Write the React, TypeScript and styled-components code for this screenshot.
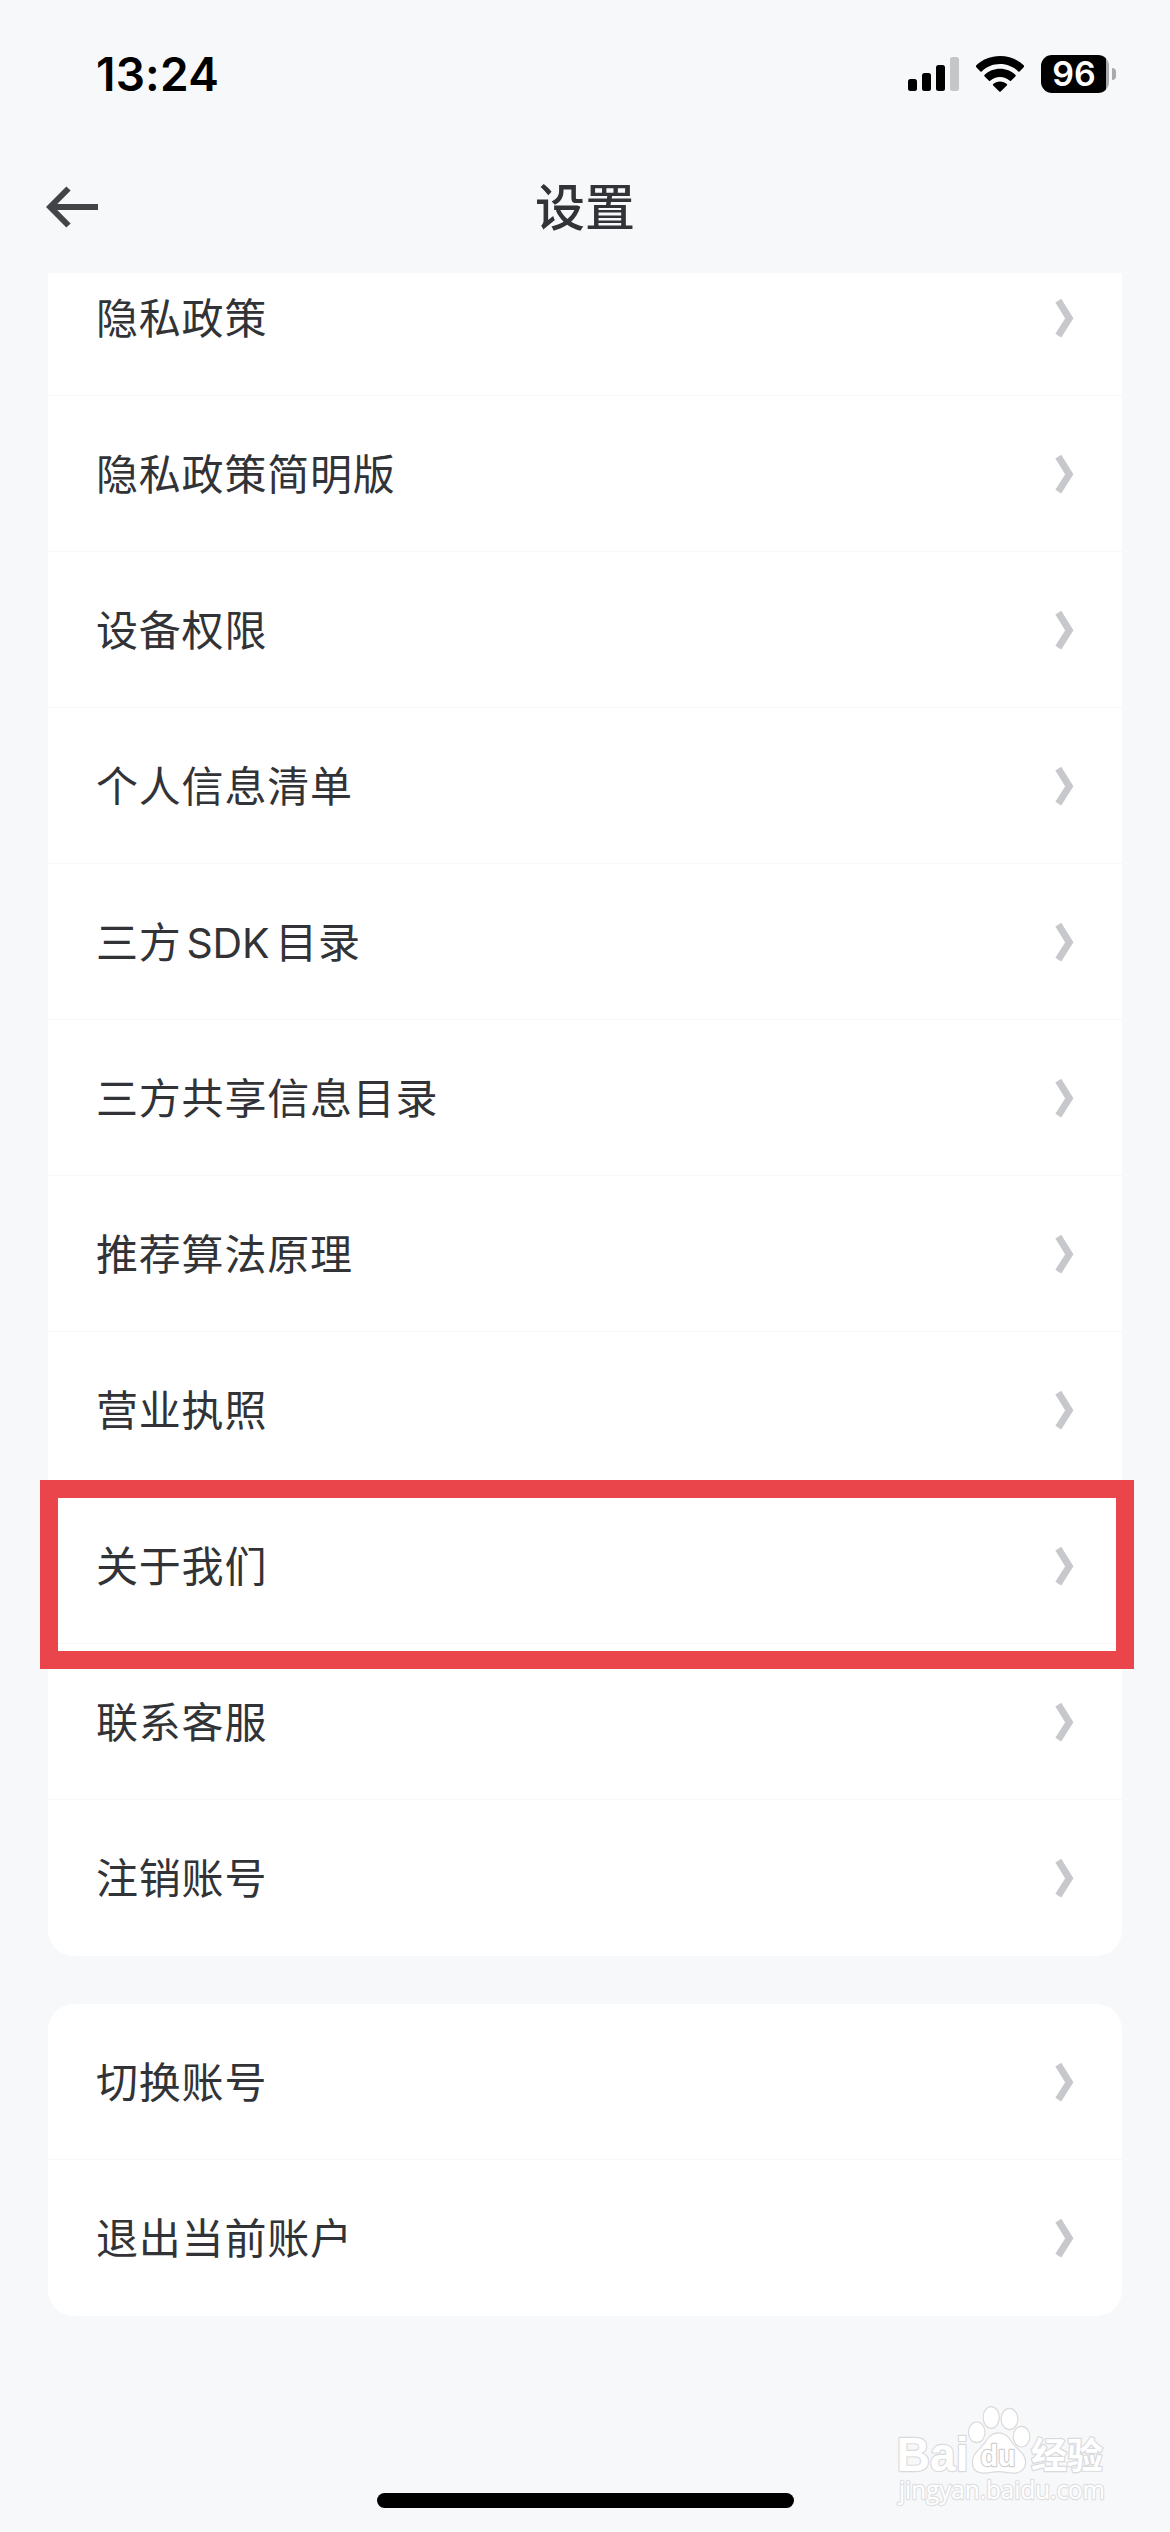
import React from "react";
import styled, { createGlobalStyle } from "styled-components";

const GlobalStyle = createGlobalStyle`
  html, body { margin: 0; padding: 0; background: #f7f8fa; }
  * { box-sizing: border-box; }
`;

const Screen = styled.div`
  position: relative;
  display: flex;
  flex-direction: column;
  width: 1170px;
  height: 2532px;
  overflow: hidden;
  background: #f7f8fa;
  color: #323337;
  font-family: Inter, "Noto Sans CJK SC", sans-serif;
`;

const StatusBar = styled.header`
  display: flex;
  justify-content: space-between;
  align-items: center;
  flex: none;
  height: 148px;
  padding: 0 54px 0 96px;
`;

const Clock = styled.time`
  color: #000;
  font-size: 46px;
  font-weight: 600;
  line-height: 56px;
  letter-spacing: 0.2px;
`;

const StatusIcons = styled.div`
  display: flex;
  align-items: center;
  gap: 17px;
  height: 38px;
`;

const Battery = styled.div`
  display: flex;
  align-items: center;
  gap: 3px;
`;

const BatteryBody = styled.div`
  display: flex;
  align-items: center;
  justify-content: center;
  width: 68px;
  height: 38px;
  padding-right: 2px;
  border-radius: 11px;
  background: linear-gradient(to right, #000 65px, #a9aaac 65px);
  color: #fff;
  font-size: 34px;
  font-weight: 600;
  line-height: 38px;
`;

const BatteryTip = styled.div`
  width: 4px;
  height: 12px;
  border-radius: 0 6px 6px 0;
  background: #a9aaac;
`;

const NavBar = styled.nav`
  display: grid;
  grid-template-columns: 1fr auto 1fr;
  align-items: center;
  flex: none;
  height: 125px;
  padding: 0 46px 7px;
`;

const BackButton = styled.button`
  display: flex;
  justify-self: start;
  padding: 0;
  border: 0;
  background: none;
`;

const Title = styled.h1`
  margin: 2px 0 0;
  font-size: 50px;
  font-weight: 500;
  line-height: 72px;
`;

const ScrollArea = styled.main`
  display: flex;
  flex-direction: column;
  flex: 1;
  gap: 48px;
  min-height: 0;
  padding: 0 48px;
  overflow: hidden;
`;

const Card = styled.section<{ $scrolled?: number }>`
  flex: none;
  margin-top: ${(p) => -(p.$scrolled ?? 0)}px;
  border-radius: 26px;
  background: #fff;
`;

const Row = styled.div`
  position: relative;
  display: flex;
  align-items: center;
  justify-content: space-between;
  height: 156px;
  padding: 0 48px;
  border-bottom: 1px solid #f8f8f9;

  &:last-child {
    border-bottom-color: transparent;
  }
`;

const Label = styled.span`
  margin-top: 2px;
  font-size: 42px;
  letter-spacing: 0.8px;
  line-height: 60px;
`;

const Latin = styled.span`
  margin: 0 6px 0 5px;
  font-size: 41px;
  letter-spacing: -0.3px;
`;

const Highlight = styled.div`
  position: absolute;
  z-index: 1;
  top: -8px;
  right: -12px;
  bottom: -26px;
  left: -8px;
  border: 18px solid #e9454b;
`;

const HomeIndicator = styled.div`
  position: absolute;
  bottom: 24px;
  left: 377px;
  width: 417px;
  height: 15px;
  border-radius: 8px;
  background: #000;
`;

const WatermarkArt = styled.svg`
  position: absolute;
  right: 54px;
  bottom: 20px;
`;

const ChevronIcon = styled.svg`
  flex: none;
  overflow: visible;
`;

const Signal = () => (
  <svg width="51" height="36" viewBox="0 0 51 36">
    <rect x="0" y="23" width="9" height="12" rx="2.5" />
    <rect x="14" y="17" width="9" height="18" rx="2.5" />
    <rect x="28" y="9" width="9" height="26" rx="2.5" />
    <rect x="42" y="1" width="9" height="34" rx="2.5" fill="#c5c6c8" />
  </svg>
);

const Wifi = () => (
  <svg width="48" height="36" viewBox="0 0 48 36">
    <path d="M24 0C33.3 0 41.7 3.6 47.7 9.3Q48.6 10.2 47.7 11.2L43.6 15.4Q43 16 42.3 15.4C37.5 10.9 31 8.1 24 8.1S10.5 10.9 5.7 15.4Q5 16 4.4 15.4L.3 11.2Q-.6 10.2.3 9.3C6.3 3.6 14.7 0 24 0Z" />
    <path d="M24 12.8C30 12.8 35.4 15.1 39.4 18.8Q40.2 19.6 39.4 20.4L35 24.8Q34.4 25.3 33.8 24.8C31.2 22.5 27.8 21 24 21S16.8 22.5 14.2 24.8Q13.6 25.3 13 24.8L8.6 20.4Q7.8 19.6 8.6 18.8C12.6 15.1 18 12.8 24 12.8Z" />
    <path d="M24 25.5C26.6 25.5 29 26.5 30.8 28Q31.5 28.7 30.8 29.4L24.7 35.5Q24 36.2 23.3 35.5L17.2 29.4Q16.5 28.7 17.2 28C19 26.5 21.4 25.5 24 25.5Z" />
  </svg>
);

const BackArrow = () => (
  <svg width="53" height="42" viewBox="0 0 53 42" fill="none" stroke="#424447" strokeWidth="6">
    <path d="M22.5 2.5L4.2 21L22.5 39.5M5 21H52" />
  </svg>
);

const Chevron = () => (
  <ChevronIcon width="20" height="39" viewBox="0 0 20 39" fill="none" stroke="#c7c8cc" strokeWidth="7">
    <path d="M4.3 2.7L15.3 20.3L4.3 37.7" />
  </ChevronIcon>
);

const Watermark = () => (
  <WatermarkArt
    width="220"
    height="112"
    viewBox="896 2400 220 112"
    fill="#fff"
    stroke="#d9dadc"
    strokeWidth="2.4"
    paintOrder="stroke"
    strokeLinejoin="round"
  >
    <text x="896.5" y="2471" textLength="72" lengthAdjust="spacingAndGlyphs" fontFamily="Liberation Sans" fontSize="48" fontWeight="700">Bai</text>
    <ellipse cx="976.7" cy="2432.3" rx="7.7" ry="9.7" />
    <ellipse cx="991.2" cy="2417.5" rx="7.5" ry="10.3" />
    <ellipse cx="1009.5" cy="2419" rx="7.8" ry="10" />
    <ellipse cx="1021.5" cy="2436.7" rx="7.7" ry="9.7" />
    <path d="M998.5 2433.5C1004 2433.5 1008 2437 1011 2442C1015 2449 1025 2453 1025 2462C1025 2469 1020 2472.5 1014 2472.5C1008 2472.5 1004 2471 998.5 2471C993 2471 989 2472.5 984 2472.5C977 2472.5 973 2469 973 2462C973 2453 982 2449 986 2442C989 2437 993 2433.5 998.5 2433.5Z" />
    <text x="980.5" y="2466" textLength="35" lengthAdjust="spacingAndGlyphs" fontFamily="Liberation Sans" fontSize="29" fontWeight="700" stroke="#cfd0d2">du</text>
    <text x="1031" y="2468.5" textLength="72" lengthAdjust="spacingAndGlyphs" fontFamily="Noto Sans CJK SC" fontSize="36" fontWeight="700">经验</text>
    <text x="899" y="2499" textLength="206" lengthAdjust="spacingAndGlyphs" fontFamily="Open Sans" fontSize="25" fontWeight="400" stroke="#dfe0e2">jingyan.baidu.com</text>
  </WatermarkArt>
);

const policyItems: { id: string; label: React.ReactNode }[] = [
  { id: "privacy", label: "隐私政策" },
  { id: "privacy-brief", label: "隐私政策简明版" },
  { id: "permissions", label: "设备权限" },
  { id: "personal-info", label: "个人信息清单" },
  { id: "sdk", label: <>三方<Latin>SDK</Latin>目录</> },
  { id: "sharing", label: "三方共享信息目录" },
  { id: "algorithm", label: "推荐算法原理" },
  { id: "license", label: "营业执照" },
  { id: "about", label: "关于我们" },
  { id: "support", label: "联系客服" },
  { id: "delete", label: "注销账号" },
];

const accountItems = [
  { id: "switch", label: "切换账号" },
  { id: "logout", label: "退出当前账户" },
];

const SettingRow = ({ label, marked }: { label: React.ReactNode; marked?: boolean }) => (
  <Row>
    <Label>{label}</Label>
    <Chevron />
    {marked && <Highlight />}
  </Row>
);

export default function App() {
  return (
    <>
      <GlobalStyle />
      <Screen>
        <StatusBar>
          <Clock>13:24</Clock>
          <StatusIcons>
            <Signal />
            <Wifi />
            <Battery>
              <BatteryBody>96</BatteryBody>
              <BatteryTip />
            </Battery>
          </StatusIcons>
        </StatusBar>
        <NavBar>
          <BackButton aria-label="返回">
            <BackArrow />
          </BackButton>
          <Title>设置</Title>
        </NavBar>
        <ScrollArea>
          <Card $scrolled={33}>
            {policyItems.map((item) => (
              <SettingRow key={item.id} label={item.label} marked={item.id === "about"} />
            ))}
          </Card>
          <Card>
            {accountItems.map((item) => (
              <SettingRow key={item.id} label={item.label} />
            ))}
          </Card>
        </ScrollArea>
        <HomeIndicator />
        <Watermark />
      </Screen>
    </>
  );
}
